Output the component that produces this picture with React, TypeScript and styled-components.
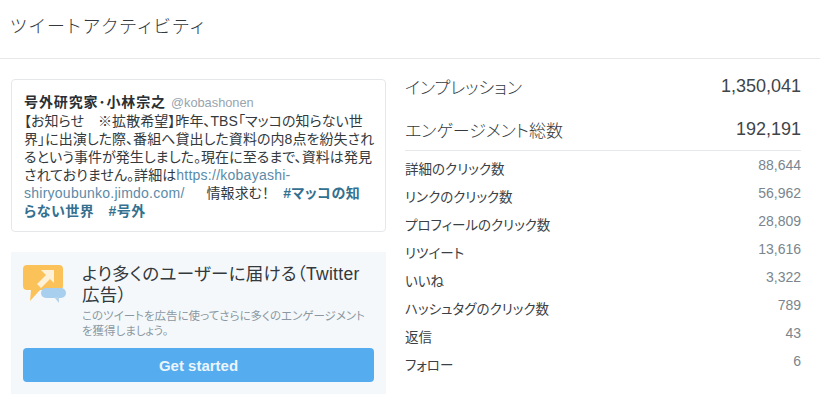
import React from "react";
import styled, { createGlobalStyle } from "styled-components";

const Global = createGlobalStyle`
  html, body { margin: 0; padding: 0; background: #fff; }
  body {
    width: 820px; height: 414px; overflow: hidden;
    font-family: "Liberation Sans", "Noto Sans CJK JP", sans-serif;
    font-feature-settings: "palt";
    color: #292f33;
  }
`;

const Header = styled.header`
  height: 59px;
  box-sizing: border-box;
  border-bottom: 1px solid #e6e8ea;
  padding: 15px 0 0 10px;
`;
const Title = styled.h1`
  margin: 0;
  font-size: 18px;
  line-height: 24px;
  font-weight: 300;
  color: #33393d;
  letter-spacing: 2.3px;
`;
const Body = styled.main`
  display: flex;
  padding: 20px 19px 0 11px;
  gap: 19px;
`;
const LeftCol = styled.section`
  width: 375px;
  flex: none;
  display: flex;
  flex-direction: column;
  gap: 20px;
`;
const TweetCard = styled.article`
  height: 153px;
  box-sizing: border-box;
  border: 1px solid #e4e8eb;
  border-radius: 4px;
  padding: 13px 0 0 12px;
  font-size: 14px;
  line-height: 18px;
  color: #33393d;
  letter-spacing: 0.05px;
  white-space: nowrap;
`;
const AuthorRow = styled.div`
  display: flex;
  align-items: baseline;
  gap: 5px;
`;
const Author = styled.strong`
  font-size: 14px;
  font-weight: 700;
  letter-spacing: 0.9px;
  color: #292f33;
`;
const Handle = styled.span`
  font-size: 12.8px;
  letter-spacing: 0;
  color: #98a4ae;
`;
const Link = styled.a`
  color: #5b8ba8;
  letter-spacing: 0.25px;
  text-decoration: none;
`;
const Hash = styled.a`
  color: #34708f;
  font-weight: 700;
  letter-spacing: 0.5px;
  text-decoration: none;
`;
const Promo = styled.aside`
  height: 142px;
  box-sizing: border-box;
  background: #f5f8fa;
  padding: 12px 12px 0 12px;
  display: flex;
  flex-direction: column;
`;
const PromoTop = styled.div`
  display: flex;
  gap: 15px;
`;
const PromoText = styled.div`
  flex: 1;
  min-width: 0;
`;
const PromoTitle = styled.h2`
  margin: 0;
  font-size: 17.5px;
  line-height: 21px;
  font-weight: 400;
  letter-spacing: 0.3px;
  color: #33393d;
`;
const PromoDesc = styled.p`
  margin: 3px 0 0;
  font-size: 11.5px;
  line-height: 15px;
  color: #8b98a3;
`;
const CTA = styled.button`
  margin-top: 9px;
  height: 34px;
  width: 351px;
  border: 0;
  border-radius: 4px;
  background: #55acee;
  color: #eaf5fd;
  font: 700 15px "Liberation Sans", sans-serif;
  padding: 0;
`;
const RightCol = styled.section`
  flex: 1;
  min-width: 0;
`;
const MainRow = styled.div<{ $mt: number }>`
  display: flex;
  justify-content: space-between;
  align-items: center;
  margin-top: ${(p) => p.$mt}px;
  height: 22px;
  font-size: 17px;
  font-weight: 300;
  color: #33393d;
`;
const MainValue = styled.span`
  font-size: 18px;
  font-weight: 400;
  color: #3f4549;
`;
const Divider = styled.hr`
  margin: 10px 0 0;
  border: 0;
  border-top: 1px solid #e6e8ea;
`;
const Rows = styled.ul`
  list-style: none;
  margin: 0;
  padding: 6px 0 0;
`;
const Row = styled.li`
  display: flex;
  justify-content: space-between;
  height: 28px;
  font-size: 13.5px;
  color: #3a4044;
`;
const RowLabel = styled.span`
  line-height: 25px;
`;
const RowValue = styled.span`
  line-height: 16px;
  font-size: 14px;
  color: #7a858d;
`;

const PromoIcon = () => (
  <svg width="44" height="44" viewBox="0 0 44 44" style={{ flex: "none" }}>
    <path d="M4 1h32a4 4 0 0 1 4 4v17a4 4 0 0 1-4 4H17L7 37l1-11H4a4 4 0 0 1-4-4V5a4 4 0 0 1 4-4z" fill="#fcc25a" />
    <rect x="18" y="24" width="25" height="10" rx="5" fill="#a9cfee" />
    <path d="M31 33h5v6z" fill="#b5d3ea" />
    <path d="M18 6h13v13l-4-4-9 9-4-4 9-9z" fill="#fdf1d8" />
  </svg>
);

const rows: [string, string][] = [
  ["詳細のクリック数", "88,644"],
  ["リンクのクリック数", "56,962"],
  ["プロフィールのクリック数", "28,809"],
  ["リツイート", "13,616"],
  ["いいね", "3,322"],
  ["ハッシュタグのクリック数", "789"],
  ["返信", "43"],
  ["フォロー", "6"],
];

export default function App() {
  return (
    <>
      <Global />
      <Header>
        <Title>ツイートアクティビティ</Title>
      </Header>
      <Body>
        <LeftCol>
          <TweetCard>
            <AuthorRow>
              <Author>号外研究家･小林宗之</Author>
              <Handle>@kobashonen</Handle>
            </AuthorRow>
            【お知らせ　※拡散希望】昨年、TBS「マッコの知らない世
            <br />
            界」に出演した際、番組へ貸出した資料の内8点を紛失され
            <br />
            るという事件が発生しました。現在に至るまで、資料は発見
            <br />
            されておりません。詳細は
            <Link>https://kobayashi-</Link>
            <br />
            <Link>shiryoubunko.jimdo.com/</Link>
            {"　\u00a0\u00a0情報求む！　"}
            <Hash>#マッコの知</Hash>
            <br />
            <Hash>らない世界</Hash>
            {"　"}
            <Hash>#号外</Hash>
          </TweetCard>
          <Promo>
            <PromoTop>
              <PromoIcon />
              <PromoText>
                <PromoTitle>
                  より多くのユーザーに届ける（Twitter
                  <br />
                  広告）
                </PromoTitle>
                <PromoDesc>このツイートを広告に使ってさらに多くのエンゲージメントを獲得しましょう。</PromoDesc>
              </PromoText>
            </PromoTop>
            <CTA>Get started</CTA>
          </Promo>
        </LeftCol>
        <RightCol>
          <MainRow $mt={-4}>
            <span>インプレッション</span>
            <MainValue>1,350,041</MainValue>
          </MainRow>
          <MainRow $mt={21}>
            <span>エンゲージメント総数</span>
            <MainValue>192,191</MainValue>
          </MainRow>
          <Divider />
          <Rows>
            {rows.map(([label, value]) => (
              <Row key={label}>
                <RowLabel>{label}</RowLabel>
                <RowValue>{value}</RowValue>
              </Row>
            ))}
          </Rows>
        </RightCol>
      </Body>
    </>
  );
}
